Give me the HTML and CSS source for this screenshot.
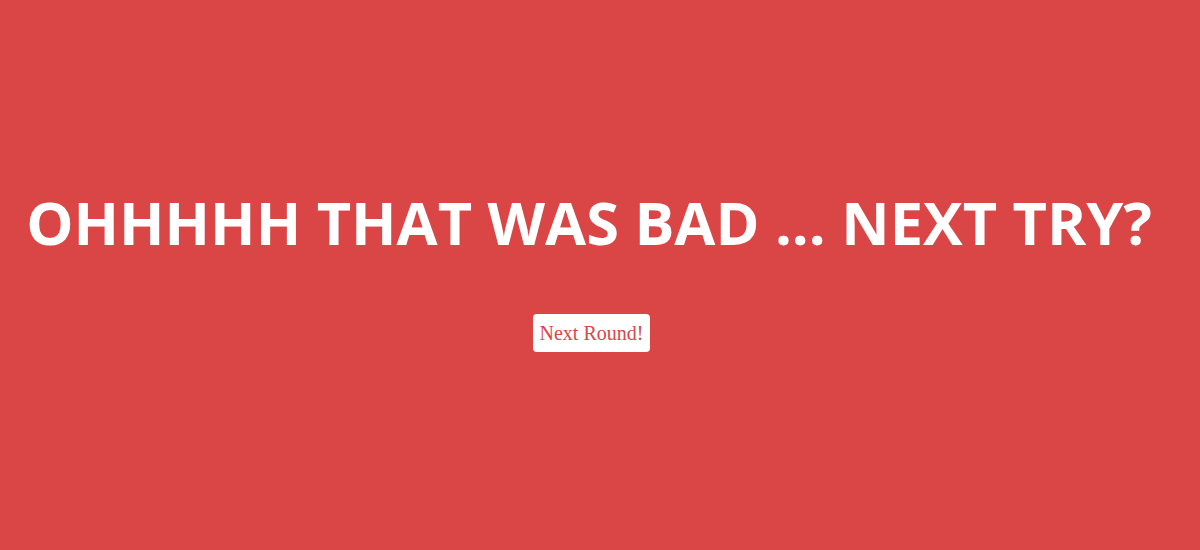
FILE: index.html
```html
<!DOCTYPE html>
<html>
<head>
<meta charset="utf-8">
<link rel="stylesheet" href="styles.css">
</head>
<body>
<main class="screen">
  <h1 class="title">OHHHHH THAT WAS BAD ... NEXT TRY?</h1>
  <button class="next-btn">Next Round!</button>
</main>
</body>
</html>
```
FILE: styles.css
```css
html, body {
  margin: 0;
  padding: 0;
  height: 100%;
}
body {
  background: #da4646;
}
.screen {
  box-sizing: border-box;
  height: 100vh;
  padding: 0 17px 12px 0;
  display: flex;
  flex-direction: column;
  align-items: center;
  justify-content: center;
}
.title {
  margin: 0;
  padding-right: 5px;
  font-family: "Open Sans", sans-serif;
  font-weight: 700;
  font-size: 59.5px;
  line-height: 72px;
  color: #ffffff;
  white-space: nowrap;
}
.next-btn {
  margin-top: 56px;
  background: #ffffff;
  color: #da4646;
  border: none;
  border-radius: 4px;
  padding: 7px 7px;
  font-family: "Liberation Serif", serif;
  font-size: 20px;
  line-height: 24px;
  cursor: pointer;
}
```
